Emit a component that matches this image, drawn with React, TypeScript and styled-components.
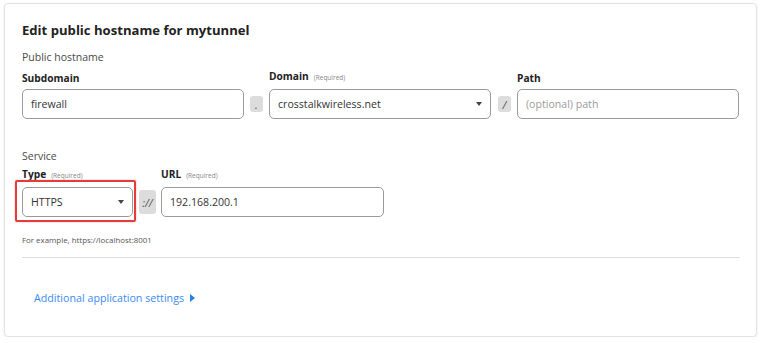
import React from "react";
import styled, {createGlobalStyle} from "styled-components";

const GlobalStyle = createGlobalStyle`
  body {
    margin: 0;
    background: #ffffff;
    font-family: "Open Sans", "Noto Sans", Arial, sans-serif;
  }
`

const Card = styled.div`
  box-sizing: border-box;
  margin: 3px 0 0 4px;
  width: 753px;
  height: 334px;
  border: 1px solid #e3e3e3;
  border-radius: 4px;
  box-shadow: 0 1px 3px rgba(0, 0, 0, 0.08);
  padding: 16px 16px 0 17px;
  background: #fff;
`

const Title = styled.h2`
  margin: 0;
  font-size: 13.1px;
  line-height: 20px;
  font-weight: 700;
  color: #222;
`

const SectionTitle = styled.div<{top: number}>`
  margin-top: ${props => props.top}px;
  font-size: 10.5px;
  line-height: 16px;
  color: #4a4a4a;
`

const Row = styled.div<{top: number}>`
  display: flex;
  align-items: flex-end;
  margin-top: ${props => props.top}px;
`

const Field = styled.div<{width: number}>`
  position: relative;
  display: flex;
  flex-direction: column;
  width: ${props => props.width}px;
`

const Label = styled.div`
  font-size: 10.2px;
  line-height: 14px;
  font-weight: 700;
  color: #222;
  margin-bottom: 4px;
  white-space: nowrap;
`

const Required = styled.span`
  font-size: 6.5px;
  font-weight: 400;
  color: #888;
  margin-left: 5px;
`

const Input = styled.div<{placeholder?: boolean}>`
  box-sizing: border-box;
  position: relative;
  height: 30px;
  border: 1px solid #9a9a9a;
  border-radius: 5px;
  padding: 0 8px;
  display: flex;
  align-items: center;
  font-size: 10.6px;
  color: ${props => props.placeholder ? "#9b9b9b" : "#333"};
  background: #fff;
`

const Caret = styled.span`
  position: absolute;
  right: 8px;
  top: 12px;
  width: 0;
  height: 0;
  border-left: 3.5px solid transparent;
  border-right: 3.5px solid transparent;
  border-top: 4px solid #444;
`

const Sep = styled.div<{w: number; h: number; gapL: number; gapR: number}>`
  box-sizing: border-box;
  width: ${props => props.w}px;
  height: ${props => props.h}px;
  margin: 0 ${props => props.gapR}px ${props => (30 - props.h) / 2}px ${props => props.gapL}px;
  background: #dcdcdc;
  border-radius: 3px;
  display: flex;
  align-items: center;
  justify-content: center;
  font-size: 11px;
  font-style: italic;
  color: #555;
`

const Highlight = styled.div`
  position: absolute;
  left: -7px;
  bottom: -5px;
  width: 121px;
  height: 42px;
  box-sizing: border-box;
  border: 2.5px solid #e53b3b;
  border-radius: 2px;
  box-shadow: 0 0 2px rgba(229, 59, 59, 0.4);
  pointer-events: none;
`

const Hint = styled.div`
  margin-top: 17px;
  font-size: 7.9px;
  line-height: 12px;
  color: #555;
`

const Divider = styled.hr`
  margin: 11px 0 0;
  border: 0;
  border-top: 1px solid #dedede;
`

const Link = styled.a`
  display: inline-flex;
  align-items: center;
  margin: 32px 0 0 12px;
  font-size: 10.7px;
  line-height: 16px;
  color: #3d8bf2;
  text-decoration: none;
  cursor: pointer;
`

const LinkArrow = styled.span`
  margin-left: 6px;
  width: 0;
  height: 0;
  border-top: 4.5px solid transparent;
  border-bottom: 4.5px solid transparent;
  border-left: 5px solid #2a7de1;
`

const App: React.FC = () => {
    return (
        <>
            <GlobalStyle/>
            <Card>
                <Title>Edit public hostname for mytunnel</Title>
                <SectionTitle top={9}>Public hostname</SectionTitle>
                <Row top={4}>
                    <Field width={222}>
                        <Label>Subdomain</Label>
                        <Input>firewall</Input>
                    </Field>
                    <Sep w={13} h={16} gapL={6} gapR={6}>.</Sep>
                    <Field width={222}>
                        <Label>Domain<Required>(Required)</Required></Label>
                        <Input>crosstalkwireless.net<Caret/></Input>
                    </Field>
                    <Sep w={13} h={16} gapL={7} gapR={6}>/</Sep>
                    <Field width={222}>
                        <Label>Path</Label>
                        <Input placeholder>(optional) path</Input>
                    </Field>
                </Row>

                <SectionTitle top={29}>Service</SectionTitle>
                <Row top={3}>
                    <Field width={111}>
                        <Label>Type<Required>(Required)</Required></Label>
                        <Input>HTTPS<Caret/></Input>
                        <Highlight/>
                    </Field>
                    <Sep w={17} h={24} gapL={6} gapR={5}>://</Sep>
                    <Field width={223}>
                        <Label>URL<Required>(Required)</Required></Label>
                        <Input>192.168.200.1</Input>
                    </Field>
                </Row>
                <Hint>For example, https://localhost:8001</Hint>
                <Divider/>
                <Link>Additional application settings<LinkArrow/></Link>
            </Card>
        </>
    )
}

export default App;
